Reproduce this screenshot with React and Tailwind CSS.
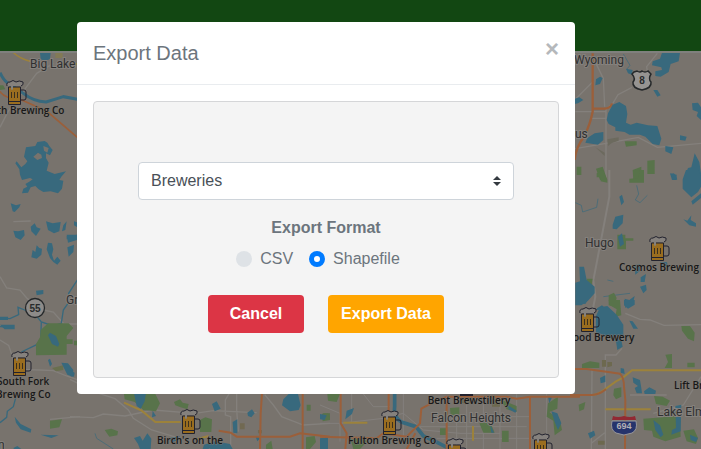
import React from "react";

const WATER = "#38697d";
const PARK = "#58734a";
const ORANGE = "#9b5f3a";
const YELLOW = "#9c823b";
const ROAD = "#84807c";

function Mug({ x, y }) {
  return (
    <g transform={`translate(${x} ${y})`} strokeLinejoin="round">
      <path d="M15 10h3q2 0 2 2v6q0 2-2 2h-3" fill="none" stroke="#22222e" strokeWidth="1" />
      <path d="M2.500 7h12v17.500h-12z" fill="#9a6d1f" stroke="#22222e" strokeWidth="1" />
      <path d="M2 21.500h13" stroke="#22222e" strokeWidth="1" />
      <path d="M5.500 12v6M8.500 12v6M11.500 12v6" stroke="#3b301f" strokeWidth="1" />
      <path d="M1 6Q0 2 4 2Q7-1 10 2Q13 0 17 2Q18 5 15 6H7v3q-1 2-2 0V6z" fill="#85817d" />
      <path d="M1 6Q0 2 4 2Q7-1 10 2Q13 0 17 2Q18 5 15 6" fill="none" stroke="#22222e" strokeWidth="1" />
    </g>
  );
}

const breweries = [
  ["th Brewing Co", -3, 114, "start"],
  ["South Fork", -3, 385, "start"],
  ["Brewing Co", -4, 398, "start"],
  ["Birch's on the", 190, 444, "middle"],
  ["Lake Brewing", 190, 457, "middle"],
  ["Fulton Brewing Co", 392, 444, "middle"],
  ["Bent Brewstillery", 469, 404, "middle"],
  ["Cosmos Brewing", 659, 271, "middle"],
  ["ood Brewery", 573, 341, "start"],
  ["Lift Br", 674, 389, "start"],
];

const towns = [
  ["Big Lake", 30, 68],
  ["Wyoming", 574, 64],
  ["us", 575, 138],
  ["Hugo", 585, 247],
  ["Gr", 66, 304],
  ["Falcon Heights", 431, 422],
  ["Lake Elm", 657, 416],
  ["n", -2, 449],
];

function BreweryMap() {
  return (
    <svg
      viewBox="0 51 701 398"
      preserveAspectRatio="xMinYMin slice"
      className="block w-full flex-1 bg-[#78736d]"
      role="img"
      aria-label="Map of breweries"
    >
      {/* Big Lake */}
      <g transform="translate(0 40) scale(.333333)" fill="none" strokeWidth="5">
        <path d="M0 262L24 215L110 100L160 70M40 545L92 543" stroke={ROAD} strokeWidth="4" />
        <path d="M38 36Q62 58 92 64M218 72h20" stroke={YELLOW} />
        <path d="M0 98Q12 124 26 130L70 160Q100 184 138 186Q165 178 190 170L232 178" stroke={WATER} strokeWidth="9" />
        <path d="M0 154Q10 174 65 180L140 213L232 292" stroke={ORANGE} />
        <path d="M120 38L152 38L150 56L138 64L122 58Z" fill={WATER} />
        <path d="M166 38h22v16h-22z" fill="#827a56" />
        <path d="M0 136l10 0l6 12l-16 2z" fill={PARK} />
        <path
          d="M78 322L106 318L112 306L134 303L142 308L148 318L158 330L150 346L138 340L138 354L146 368L140 392L164 402L198 394L184 410L178 420L190 422L186 446L174 460L152 454L130 456L116 448L106 438L92 442L84 458L66 460L70 446L82 440L76 432L90 424L98 418L90 414L66 420L60 404L58 388L46 370L50 364L64 382L76 372L82 364L72 350Z"
          fill={WATER}
        />
        <path d="M100 350L114 338L124 344L126 354L112 360ZM130 318L146 324L142 338L132 332Z" fill="#78736d" />
        <path d="M32 490L48 496L62 492L58 502L44 516L38 514ZM40 572L54 574L72 570L74 586L62 600L46 592ZM92 560L104 550L110 562L122 566L108 588L94 574ZM138 544L158 550L182 546L178 574L162 580L144 570ZM190 556L200 544L196 570L186 574ZM222 544L234 548L232 562L222 556ZM200 588L232 584V598H200Z" fill={WATER} />
      </g>
      {/* South Fork */}
      <g transform="translate(0 230) scale(.333333)" fill="none" strokeWidth="4">
        <path d="M0 140L20 174L60 180L82 206L130 240L160 246L192 282L240 282M0 330L26 346L50 418L120 420L160 422L200 438L240 452M150 568L240 560" stroke={ROAD} />
        <path d="M0 264L30 266L56 254L54 232L74 240L106 254L124 276L160 288L184 280L190 240L204 220L206 190L232 150M0 290L42 292M124 276L122 330L110 344L64 366M48 500L40 530L22 544L20 562L0 578" stroke={WATER} strokeWidth="4" />
        <path d="M0 260h24v10h-24zM0 284h44v14h-30zM98 60L106 66L110 46L118 54L126 56L124 74L110 86L94 82ZM144 38L156 40L160 58L156 74L162 92L172 80L182 92L172 104L160 96L150 84L140 58ZM202 52L222 44L220 66L206 80ZM108 182L130 180V192L110 196ZM200 14h38v14l-34 10z" fill={WATER} />
        <path d="M122 300L144 280L206 280L220 294L200 318V374L108 376L108 342L120 322ZM196 328h22v14h-22zM150 572L186 568L178 592L150 596ZM222 332h20v14h-20z" fill={PARK} />
        <path d="M156 414L190 406V420L168 424Z" fill="#696f4e" />
        <path d="M144 316L150 308L168 318L178 342L174 350L156 342ZM184 398L204 400L220 420L218 440L202 434ZM144 390L150 386L156 402L150 410ZM44 560L62 582L94 598L92 608L62 598L48 578ZM122 614L176 616L154 624ZM40 654L52 648L64 657H42Z" fill={WATER} />
      </g>
      {/* Wyoming */}
      <g transform="translate(570 40) scale(.333333)" fill="none" strokeWidth="5">
        <path d="M262 40L230 80L232 94M186 142L144 164L130 188L108 208V420M78 70L100 115L104 200M16 178L70 124M16 215H108M16 326L108 310L205 292L262 322L393 310M60 235H108" stroke={ROAD} strokeWidth="4" />
        <path d="M68 40V215Q60 255 42 290Q18 320 14 360M68 206H106Q124 202 126 190" stroke={ORANGE} strokeWidth="7" />
        <path d="M160 42L180 76L170 88" stroke={WATER} strokeWidth="2" />
        <path d="M276 38H330L326 64L302 72L296 96L272 110L256 108V94L276 90L274 82L246 76L248 64L270 56ZM168 86L188 90L186 104L174 100ZM78 118L90 110L98 114L90 132L76 136ZM250 150L262 150L272 166L262 170ZM14 176L28 172L40 180L24 190L14 192Z" fill={WATER} />
        <path d="M110 240L114 220L128 194L148 186L168 198L172 222L168 248L182 254L200 248L234 256L262 258L274 296L268 316L248 312L226 290L210 284L178 284L164 276L136 272L136 262L116 252ZM366 190L384 188L393 202V240L380 228L384 216L368 210ZM330 286L350 290L346 302L330 300ZM46 308L52 294L74 280L100 276V300L84 314ZM286 318L310 322L304 342L286 334ZM374 340L388 366L393 400V420H340L354 384L364 382ZM300 400L320 404V420H306Z" fill={WATER} />
        <path d="M164 304H200V316L168 320ZM20 380H34V405H20ZM78 386L98 380L112 420H90ZM188 390L214 380V420H190ZM232 362L254 360V402H232Z" fill={PARK} />
        <path d="M112 298L146 292V302L124 310L114 318ZM76 322L104 338V348Z" fill="#6c6a5e" />
      </g>
      {/* Hugo */}
      <g transform="translate(570 170) scale(.333333)" fill="none">
        <path d="M118 0V80L76 300L70 330L76 380L68 420" stroke={ROAD} strokeWidth="6" />
        <path d="M16 98L34 106L38 126L80 112L84 86M200 46L206 72L196 90L210 98L232 76M112 330L130 334M100 380L180 370" stroke={WATER} strokeWidth="2" />
        <path d="M80 10L98 0L112 30V38L92 34V22H80ZM178 26L206 24L208 0H222V38H178ZM142 194H166V205H190V212H168V238H142ZM50 326H68L64 350L50 350ZM116 376L132 368L140 384L132 410L116 406Z" fill={PARK} />
        <path d="M348 0H386L393 22V50L384 66L364 82L338 56V28ZM302 12L312 10L322 28L310 30ZM364 94L393 70V84L368 104ZM340 148L352 152L364 136L362 150L378 160V170L358 166ZM148 80L156 74L162 96L154 106ZM128 164L136 140L160 134L158 160L140 178L128 176ZM144 200L156 190L162 222L150 230ZM28 290H42L50 330L74 350V370L54 392L34 406H16V338L30 334ZM194 286L210 282V302L196 314ZM212 322L228 312L224 336H212ZM210 350L228 344L230 360L220 370ZM164 386L178 390L194 378L190 396L166 414ZM82 414L96 406L112 420H78ZM270 276L290 276L296 290H276Z" fill={WATER} />
      </g>
      {/* Lake Elmo */}
      <g transform="translate(570 300) scale(.333333)" fill="none">
        <path d="M166 40L210 58L240 60L282 76L393 74M106 228V165H138L156 145M66 210L64 447M106 228V447M250 340L340 315L393 230M64 430L104 398M180 285H290" stroke={ROAD} strokeWidth="4" />
        <path d="M116 0H150L154 46L136 50L140 28L120 16ZM334 78H360L374 98L372 124L354 116L336 92ZM286 164L306 162V204H284L294 186ZM352 188H374V202H352ZM36 192L60 184L88 188V204H36ZM132 266L154 262V290L138 298L130 286ZM252 288L278 290L300 302L290 318L258 312ZM220 356L280 352L300 328L330 346L332 410L286 424L250 410L246 392L222 390ZM340 392L372 388L384 414L378 432L350 424ZM26 314L46 306L42 328L28 334Z" fill={PARK} />
        <path d="M96 180h12v20h-12zM112 186h14v12l-14 4zM84 422h20v12h-20z" fill="#6d694f" />
        <path d="M78 48L90 22L112 18L140 44L160 74V104L154 120L158 140L142 150L138 124L98 104L78 98ZM22 0L54 0L46 12L30 10ZM162 0L194 0V14L174 26L162 16ZM178 62L188 64L204 86H190ZM152 204L162 206L164 222L152 218ZM90 234L106 226V246L92 250ZM188 232L210 240L214 264L216 280L200 280L194 264L204 258L190 248ZM222 274L238 262L258 272L256 282H224ZM250 360L270 376L280 404L272 412L256 390ZM316 318L334 314L332 394L304 404L306 390L318 384ZM54 400L72 392L76 406L60 416ZM360 404L384 414L378 426L362 420Z" fill={WATER} />
        <path d="M0 285H66Q82 285 102 270L138 244L160 232L186 211H393M106 328H242" stroke={YELLOW} strokeWidth="6" />
        <path d="M0 285H66Q86 285 108 268M0 207H50L120 217L150 221Q162 232 162 260L166 300L165 447" stroke={ORANGE} strokeWidth="6" />
      </g>
      {/* Minneapolis, west */}
      <g transform="translate(70 370) scale(.333333)" fill="none">
        <path d="M0 28L80 68L135 86L175 120L190 145L245 180L330 205M0 140L70 143L100 132L165 138L250 120L375 130L430 122L560 128M478 70L466 90V135L482 140V237M500 70V120L505 185M584 74L610 105L635 140L700 165L780 160" stroke={ROAD} strokeWidth="4" />
        <path d="M75 190L80 205L130 237" stroke={WATER} strokeWidth="2" />
        <path d="M162 72H256L270 100L258 124L220 120L194 96L164 88ZM312 96L330 88L338 98L356 102L352 118L332 112L316 106ZM104 180L124 176L144 184L142 196L118 200ZM390 150L406 142L426 148L424 186H390ZM588 224L604 212L608 237H588ZM708 202L734 198L738 216L720 237H708ZM758 130H780V150L758 146ZM710 104h12v18h-12z" fill={PARK} />
        <path d="M192 70H228L224 94L212 116L200 108ZM426 102L440 94L452 116L434 124ZM532 128L546 118L554 130L544 142L534 138ZM248 122L258 138L246 142ZM488 156L502 148V190L490 188ZM640 88L656 72H684L692 106L686 120L660 124L636 106ZM192 204L210 198L218 212L232 190L244 206L242 237H210L204 222ZM402 224L436 214L480 222L488 237H398ZM300 204L330 198L318 212L304 218ZM0 0L14 8L12 20L0 18ZM556 198L574 202L562 214Z" fill={WATER} />
        <path d="M510 160h14v18h-14zM564 180h12v10h-12z" fill="#716952" />
        <path d="M162 98L215 122L256 156H332M380 208L416 198" stroke={YELLOW} strokeWidth="6" />
        <path d="M576 70L572 130L570 237M698 70V237M446 182L482 188L500 200H660L690 190L780 200" stroke={ORANGE} strokeWidth="6" />
      </g>
      {/* Saint Paul */}
      <g transform="translate(320 370) scale(.333333)" fill="none">
        <path d="M130 72L160 110H210M0 105L60 130L60 215M60 160L190 145L250 130L310 180L420 190L540 190M250 72V200M410 130V237M440 90V237M490 100V237M540 80V237M590 72V237M680 72V237M300 170H620M350 205H640M490 140H630M0 160H60M95 72V160" stroke={ROAD} strokeWidth="3" />
        <path d="M22 72H60L50 96L24 92ZM6 132L24 130L30 150L8 154ZM390 114L418 112V134L392 138ZM478 160L510 154L524 188L490 188ZM540 88L590 108V126L560 118ZM684 100L714 80L712 116L688 126L720 150L726 180L704 196L700 152L680 140ZM546 182h20v34h-20zM92 208L130 200L140 216L120 237H100ZM360 175h20v20h-20z" fill={PARK} />
        <path d="M420 84h40v16h-40zM516 86h24v24h-24z" fill="#6d694f" />
        <path d="M76 148L80 122L102 114L96 132ZM0 132L20 136L14 150L0 148ZM564 106L590 122L586 128L566 118ZM510 162L522 188H514ZM694 124L712 130L724 160L714 180L704 156ZM684 80L696 82L688 100ZM0 205L24 202V237H0Z" fill={WATER} />
        <path d="M224 72V110Q220 142 244 156L288 170L310 198L346 214L390 237" stroke={WATER} strokeWidth="11" />
        <path d="M70 158H142M459 168V212" stroke={YELLOW} strokeWidth="6" />
        <path d="M62 72V160L80 190L76 237M206 72V130M0 200L170 205L190 190L260 200L300 160L304 116L345 94L380 80H560L590 86L630 80H780M380 80V237M630 80V237M260 237L286 190" stroke={ORANGE} strokeWidth="6" />
      </g>

      {/* Route shields */}
      <g fontFamily="'Liberation Sans', Arial, sans-serif" fontWeight="700" textAnchor="middle">
        <circle cx="35" cy="308" r="9.500" fill="#8d8b89" stroke="#25282a" strokeWidth="1.300" />
        <text x="35" y="312" fontSize="10" fill="#292b2c">55</text>
        <path d="M634 72L637 71Q640 73 642 71Q645 73 648 71L651 74Q648 79 651 82Q652 88 642 90Q632 88 633 82Q636 79 632 74Z" fill="#969492" stroke="#25282a" strokeWidth="1.500" />
        <text x="642" y="84" fontSize="10" fill="#292b2c">8</text>
        <path d="M612 421H636Q638 430 632 433L624 435L616 433Q610 430 612 421Z" fill="#26346c" stroke="#99979a" />
        <path d="M612 420L613 416Q618 418 624 416Q630 418 635 416L636 420Z" fill="#912933" />
        <text x="624" y="429" fontSize="9" fill="#b2b1b5">694</text>
      </g>

      <Mug x={6} y={80} />
      <Mug x={11} y={351} />
      <Mug x={180} y={409} />
      <Mug x={381} y={410} />
      <Mug x={446} y={438} />
      <Mug x={532} y={433} />
      <Mug x={649} y={236} />
      <Mug x={579} y={307} />
      <path d="M460 394h13v2h-13z" fill="#22222e" />

      <g
        fontFamily="Roboto, 'Noto Sans', sans-serif"
        fontSize="12"
        fill="#303030"
        stroke="#85817d"
        strokeWidth="2"
        paintOrder="stroke"
      >
        {towns.map(([name, x, y]) => (
          <text key={name} x={x} y={y}>{name}</text>
        ))}
      </g>
      <g
        fontFamily="'Open Sans', 'Noto Sans', sans-serif"
        fontSize="10"
        fontWeight="600"
        fill="#181818"
        stroke="#7b7771"
        strokeWidth="1"
        paintOrder="stroke"
      >
        {breweries.map(([name, x, y, anchor]) => (
          <text key={name} x={x} y={y} textAnchor={anchor}>{name}</text>
        ))}
      </g>
      <path d="M0 52H701" stroke="#7f807d" strokeWidth="2" />
    </svg>
  );
}

function FormatOption({ id, label, defaultChecked }) {
  return (
    <div className="mr-4 flex items-center gap-2">
      <input
        id={id}
        type="radio"
        name="format"
        defaultChecked={defaultChecked}
        className="size-4 appearance-none rounded-full bg-[#dee2e6] checked:border-[5px] checked:border-[#007bff] checked:bg-white"
      />
      <label htmlFor={id}>{label}</label>
    </div>
  );
}

function ExportDialog() {
  return (
    <div
      role="dialog"
      aria-modal="true"
      aria-labelledby="export-title"
      className="w-full max-w-[498px] rounded bg-white text-base text-[#6c757d]"
    >
      <header className="flex items-start justify-between border-b border-[#e9ecef] p-4">
        <h1 id="export-title" className="text-xl leading-[30px]">Export Data</h1>
        <button type="button" aria-label="Close" className="text-2xl leading-[22px] font-bold text-[#b5b8bb]">
          ×
        </button>
      </header>
      <div className="p-4">
        <form
          onSubmit={(event) => event.preventDefault()}
          className="flex flex-col items-center rounded border border-[#d5d6d8] bg-[#f4f4f4] px-11 pt-[60px] pb-11"
        >
          <div className="relative w-full">
            <select
              aria-label="Layer"
              defaultValue="Breweries"
              className="block h-[38px] w-full appearance-none rounded border border-[#ced4da] bg-white px-3 text-[#495057]"
            >
              <option>Breweries</option>
            </select>
            <svg viewBox="0 0 4 5" className="pointer-events-none absolute top-[14px] right-[13px] h-[10px] w-2" aria-hidden="true">
              <path fill="#343a40" d="M2 0L0 2h4zm0 5L0 3h4z" />
            </svg>
          </div>
          <fieldset className="mt-4 flex flex-col">
            <legend className="mx-auto mb-[7px] font-bold">Export Format</legend>
            <div className="flex">
              <FormatOption id="format-csv" label="CSV" />
              <FormatOption id="format-shapefile" label="Shapefile" defaultChecked />
            </div>
          </fieldset>
          <div className="mt-6 flex gap-6">
            <button type="button" className="h-[38px] w-24 rounded bg-[#dc3545] font-bold text-white">
              Cancel
            </button>
            <button type="submit" className="h-[38px] w-[116px] rounded bg-[#ffa500] font-bold text-white">
              Export Data
            </button>
          </div>
        </form>
      </div>
    </div>
  );
}

export default function App() {
  return (
    <div className="relative flex min-h-screen flex-col overflow-hidden font-['Liberation_Sans',Arial,sans-serif]">
      <div className="h-[51px] bg-[#124712]" />
      <BreweryMap />
      <div className="absolute inset-0 flex items-start justify-center pt-[22px] pr-[49px]">
        <ExportDialog />
      </div>
    </div>
  );
}
